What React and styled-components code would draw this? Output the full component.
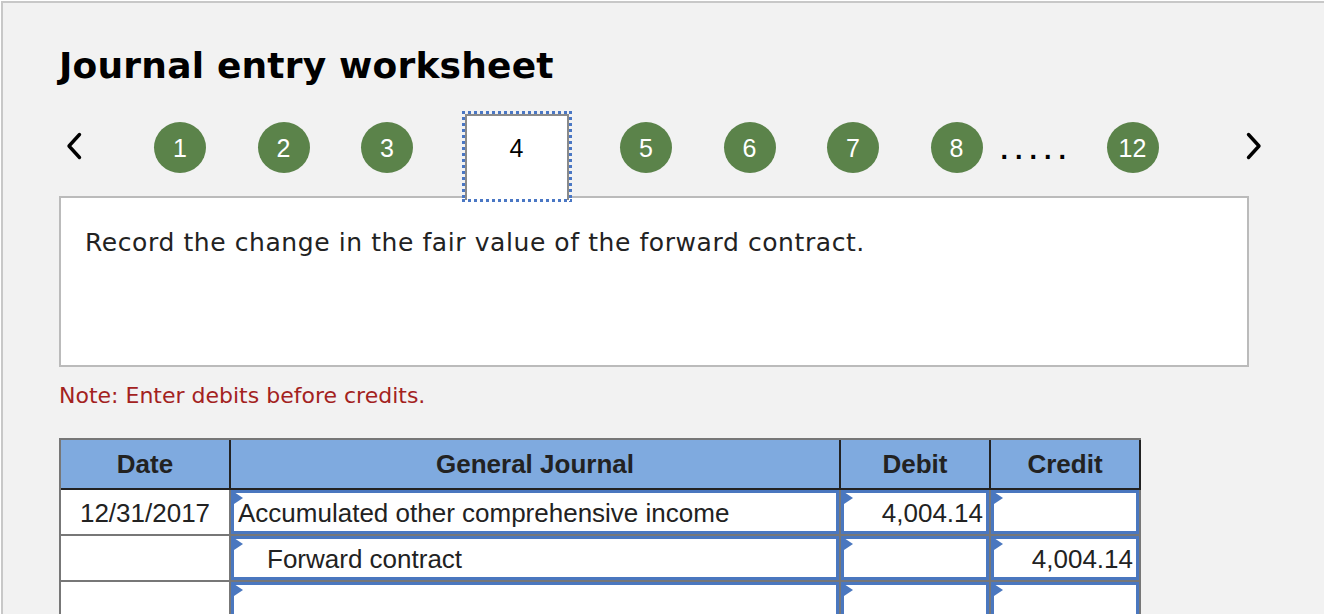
import React from 'react';
import styled, { createGlobalStyle } from 'styled-components';

const colors = {
    page: '#f2f2f2',
    frame: '#c8c8c8',
    green: '#5b834a',
    ink: '#222222',
    headBlue: '#7faadf',
    inputBlue: '#4a77bf',
    focus: '#4a77c4',
    grid: '#777777',
    note: '#a3221e',
};

const GlobalStyle = createGlobalStyle`
    html, body {
        margin: 0;
        padding: 0;
        background: #ffffff;
        overflow: hidden;
    }
`;

const Frame = styled.div`
    margin: 1px 0 0 1px;
    width: 1400px;
    height: 700px;
    border: 2px solid ${colors.frame};
    background: ${colors.page};
`;

const Content = styled.div`
    padding: 41px 0 0 56px;
`;

const Title = styled.h1`
    margin: 0;
    font-family: "DejaVu Sans", Verdana, sans-serif;
    font-weight: bold;
    font-size: 36px;
    line-height: 44px;
    letter-spacing: 0.2px;
    color: #000;
`;

const NavRow = styled.div`
    display: flex;
    align-items: flex-start;
    margin-top: 26px;
    font-family: "Liberation Sans", Arial, sans-serif;
`;

const Chevron = styled.svg`
    width: 16px;
    height: 28px;
    margin-top: 18px;
    margin-left: ${props => props.$left || 0}px;
    margin-right: ${props => props.$right || 0}px;
    flex-shrink: 0;
`;

const Steps = styled.div`
    display: flex;
    align-items: flex-start;
    gap: 51.5px;
`;

const Circle = styled.div`
    width: 52px;
    height: 51px;
    margin-top: 8px;
    border-radius: 50%;
    background: ${colors.green};
    color: #fff;
    display: flex;
    align-items: center;
    justify-content: center;
    font-size: 25px;
    line-height: 30px;
    flex-shrink: 0;
`;

const dotsX = `repeating-linear-gradient(90deg, ${colors.focus} 0 3px, transparent 3px 6px)`;
const dotsY = `repeating-linear-gradient(180deg, ${colors.focus} 0 3px, transparent 3px 6px)`;

const Tab = styled.div`
    position: relative;
    z-index: 1;
    box-sizing: border-box;
    width: 104px;
    height: 86px;
    margin-bottom: -4px;
    padding-top: 17px;
    background: #fff;
    border: 2px solid #8a8a8a;
    border-bottom: none;
    text-align: center;
    font-size: 25px;
    line-height: 30px;
    color: #000;
    flex-shrink: 0;

    /* focus ring drawn as square dots */
    &::after {
        content: '';
        position: absolute;
        top: -5px;
        left: -5px;
        right: -5px;
        bottom: -2px;
        background:
            ${dotsX} top left / 100% 3px no-repeat,
            ${dotsX} bottom left / 100% 3px no-repeat,
            ${dotsY} top left / 3px 100% no-repeat,
            ${dotsY} top right / 3px 100% no-repeat;
        pointer-events: none;
    }
`;

const Ellipsis = styled.div`
    box-sizing: border-box;
    width: 124px;
    padding-left: 18px;
    margin-top: 21px;
    font-weight: bold;
    font-size: 27px;
    line-height: 30px;
    letter-spacing: 7px;
    color: #000;
    flex-shrink: 0;
`;

const Prompt = styled.div`
    box-sizing: border-box;
    width: 1190px;
    height: 171px;
    padding: 30px 24px;
    background: #fff;
    border: 2px solid #bbb;
    font-family: "DejaVu Sans", Verdana, sans-serif;
    font-size: 25px;
    line-height: 30px;
    letter-spacing: 0.58px;
    color: ${colors.ink};
`;

const Note = styled.p`
    margin: 16px 0 0;
    font-family: "DejaVu Sans", Verdana, sans-serif;
    font-size: 22px;
    line-height: 26px;
    color: ${colors.note};
`;

const Table = styled.div`
    margin-top: 29px;
    width: 1082px;
    font-family: "Liberation Sans", Arial, sans-serif;
    font-size: 26px;
    color: ${colors.ink};
`;

const columns = '168px 608px 148px 148px';

const HeadRow = styled.div`
    display: grid;
    grid-template-columns: ${columns};
    column-gap: 2px;
    padding: 0 2px 2px 0;
    background: ${colors.ink};
    border-top: 2px solid ${colors.grid};
    border-left: 2px solid ${colors.grid};
`;

const HeadCell = styled.div`
    height: 48px;
    background: ${colors.headBlue};
    display: flex;
    align-items: center;
    justify-content: center;
    font-weight: bold;
`;

const Body = styled.div`
    display: grid;
    grid-template-columns: ${columns};
    grid-auto-rows: 44px;
    gap: 2px;
    padding: 0 2px 2px 2px;
    background: ${colors.grid};
`;

const DateCell = styled.div`
    background: #fff;
    display: flex;
    align-items: center;
    justify-content: center;
    padding-top: 2px;
`;

const Input = styled.div`
    position: relative;
    box-sizing: border-box;
    background: #fff;
    border: 3px solid ${colors.inputBlue};
    display: flex;
    align-items: center;
    justify-content: ${props => (props.$right ? 'flex-end' : 'flex-start')};
    padding: 2px ${props => (props.$right ? 3 : 0)}px 0 ${props => props.$indent || 4}px;
    white-space: nowrap;

    &::before {
        content: '';
        position: absolute;
        top: -1px;
        left: 0;
        width: 0;
        height: 0;
        border-left: 9px solid ${colors.inputBlue};
        border-top: 6px solid transparent;
        border-bottom: 6px solid transparent;
    }
`;

const rows = [
    { date: '12/31/2017', account: 'Accumulated other comprehensive income', credit: false, debit: '4,004.14', creditAmt: '' },
    { date: '', account: 'Forward contract', credit: true, debit: '', creditAmt: '4,004.14' },
    { date: '', account: '', credit: false, debit: '', creditAmt: '' },
];

const ChevronLeft = () => (
    <Chevron viewBox="0 0 16 28" $left={7} $right={72}>
        <polyline points="13.5,2.5 3,14 13.5,25.5" fill="none" stroke="#000" strokeWidth="3.4" strokeLinecap="round" strokeLinejoin="round" />
    </Chevron>
);

const ChevronRight = () => (
    <Chevron viewBox="0 0 16 28" $left={87}>
        <polyline points="2.5,2.5 13,14 2.5,25.5" fill="none" stroke="#000" strokeWidth="3.4" strokeLinecap="round" strokeLinejoin="round" />
    </Chevron>
);

const App = () => {
    return (
        <Frame>
            <GlobalStyle />
            <Content>
                <Title>Journal entry worksheet</Title>

                <NavRow>
                    <ChevronLeft />
                    <Steps>
                        <Circle>1</Circle>
                        <Circle>2</Circle>
                        <Circle>3</Circle>
                        <Tab>4</Tab>
                        <Circle>5</Circle>
                        <Circle>6</Circle>
                        <Circle>7</Circle>
                        <Circle>8</Circle>
                    </Steps>
                    <Ellipsis>.....</Ellipsis>
                    <Circle>12</Circle>
                    <ChevronRight />
                </NavRow>

                <Prompt>Record the change in the fair value of the forward contract.</Prompt>

                <Note>Note: Enter debits before credits.</Note>

                <Table>
                    <HeadRow>
                        <HeadCell>Date</HeadCell>
                        <HeadCell>General Journal</HeadCell>
                        <HeadCell>Debit</HeadCell>
                        <HeadCell>Credit</HeadCell>
                    </HeadRow>
                    <Body>
                        {rows.map((row, i) => (
                            <React.Fragment key={i}>
                                <DateCell>{row.date}</DateCell>
                                <Input $indent={row.credit ? 33 : 4}>{row.account}</Input>
                                <Input $right>{row.debit}</Input>
                                <Input $right>{row.creditAmt}</Input>
                            </React.Fragment>
                        ))}
                    </Body>
                </Table>
            </Content>
        </Frame>
    );
};

export default App;
